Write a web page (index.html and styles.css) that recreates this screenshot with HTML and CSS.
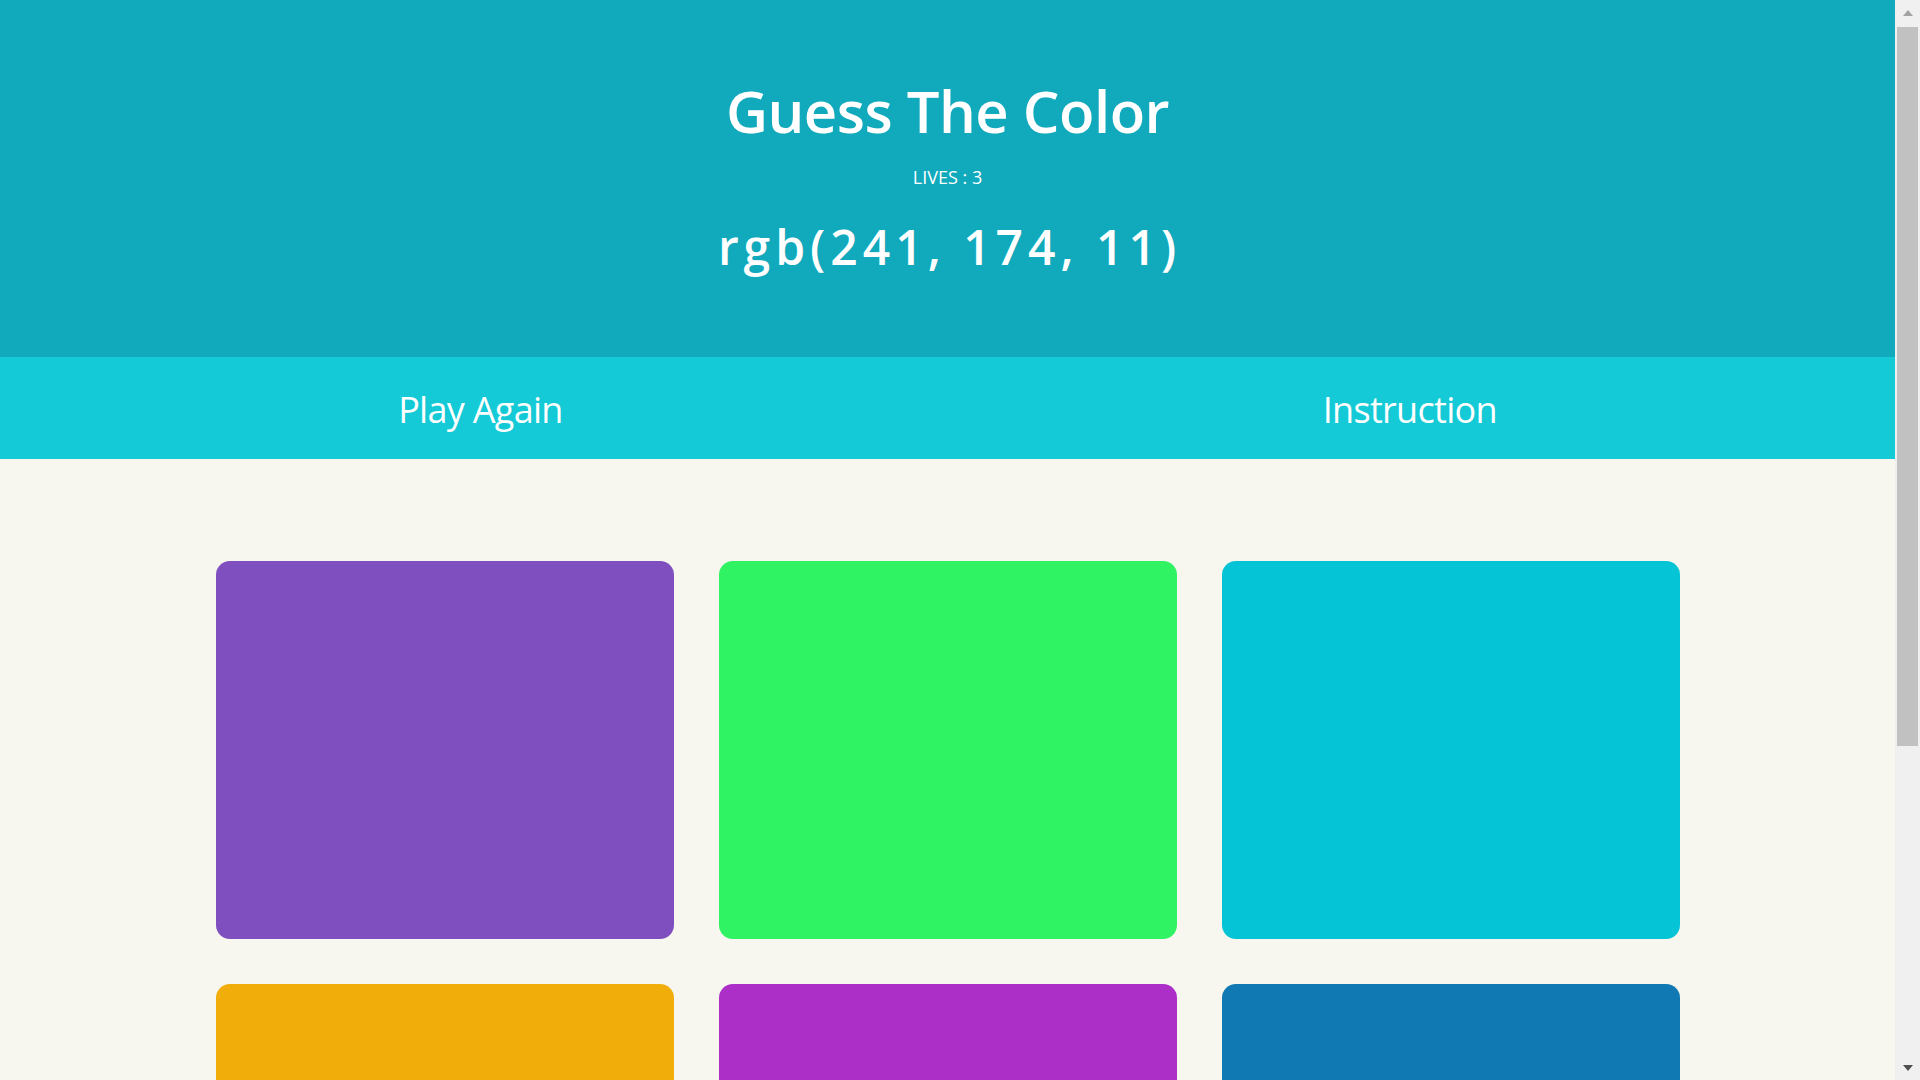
FILE: index.html
```html
<!DOCTYPE html>
<html lang="en">
<head>
<meta charset="utf-8">
<title>Guess The Color</title>
<link rel="stylesheet" href="styles.css">
</head>
<body>
<div class="page">
  <header class="top">
    <h1 class="title">Guess The Color</h1>
    <p class="lives">LIVES : 3</p>
    <p class="target">rgb(241, 174, 11)</p>
  </header>
  <nav class="menu">
    <button class="menu-btn">Play Again</button>
    <button class="menu-btn">Instruction</button>
  </nav>
  <main class="board">
    <div class="grid">
      <div class="square" style="background: rgb(127, 79, 192);"></div>
      <div class="square" style="background: rgb(47, 243, 98);"></div>
      <div class="square" style="background: rgb(5, 196, 214);"></div>
      <div class="square" style="background: rgb(241, 174, 11);"></div>
      <div class="square" style="background: rgb(172, 47, 200);"></div>
      <div class="square" style="background: rgb(16, 120, 178);"></div>
    </div>
  </main>
</div>
<div class="scrollbar" aria-hidden="true">
  <div class="sb-btn"><span class="arrow-up"></span></div>
  <div class="sb-track"><div class="sb-thumb"></div></div>
  <div class="sb-btn"><span class="arrow-down"></span></div>
</div>
</body>
</html>
```
FILE: styles.css
```css
html {
  background: #f7f6ef;
}
body {
  margin: 0;
  font-family: "Open Sans", "Noto Sans", sans-serif;
  color: #fff;
  background: #f7f6ef;
}
.page {
  margin-right: 25px;
}
.top {
  background: #11a9bc;
  height: 357px;
  box-sizing: border-box;
  padding-top: 71px;
  text-align: center;
}
.title {
  margin: 0;
  font-size: 58px;
  font-weight: 600;
  line-height: 80px;
  letter-spacing: -0.5px;
}
.lives {
  margin: 14px 0 0;
  font-size: 18px;
  line-height: 24px;
}
.target {
  margin: 28px 0 0;
  font-size: 48px;
  font-weight: 600;
  line-height: 60px;
  letter-spacing: 5px;
  padding-left: 4px;
}
.menu {
  background: #13cad6;
  height: 102px;
  box-sizing: border-box;
  padding-top: 4px;
  display: flex;
  justify-content: center;
  align-items: center;
  gap: 760px;
}
.menu-btn {
  background: none;
  border: 0;
  padding: 0;
  color: #fff;
  font-family: "Open Sans", "Noto Sans", sans-serif;
  font-size: 36px;
  font-weight: 400;
  letter-spacing: -0.7px;
  line-height: 48px;
  cursor: pointer;
}
.board {
  padding: 102px 0 180px;
}
.grid {
  display: grid;
  grid-template-columns: repeat(3, 458px);
  grid-auto-rows: 378px;
  gap: 45px;
  justify-content: center;
}
.square {
  border-radius: 14px;
}
.scrollbar {
  position: fixed;
  top: 0;
  right: 0;
  width: 25px;
  height: 100vh;
  background: #f0f0f0;
  display: flex;
  flex-direction: column;
}
.sb-btn {
  height: 25px;
  flex: none;
  display: flex;
  align-items: center;
  justify-content: center;
  padding-left: 1px;
}
.sb-track {
  flex: 1;
  padding: 2px 2px 0 2px;
}
.sb-thumb {
  height: 719px;
  background: #c1c1c1;
}
.arrow-up {
  width: 0;
  height: 0;
  border-left: 5.5px solid transparent;
  border-right: 5.5px solid transparent;
  border-bottom: 6px solid #a3a3a3;
}
.arrow-down {
  width: 0;
  height: 0;
  border-left: 5.5px solid transparent;
  border-right: 5.5px solid transparent;
  border-top: 6px solid #505050;
}
```
